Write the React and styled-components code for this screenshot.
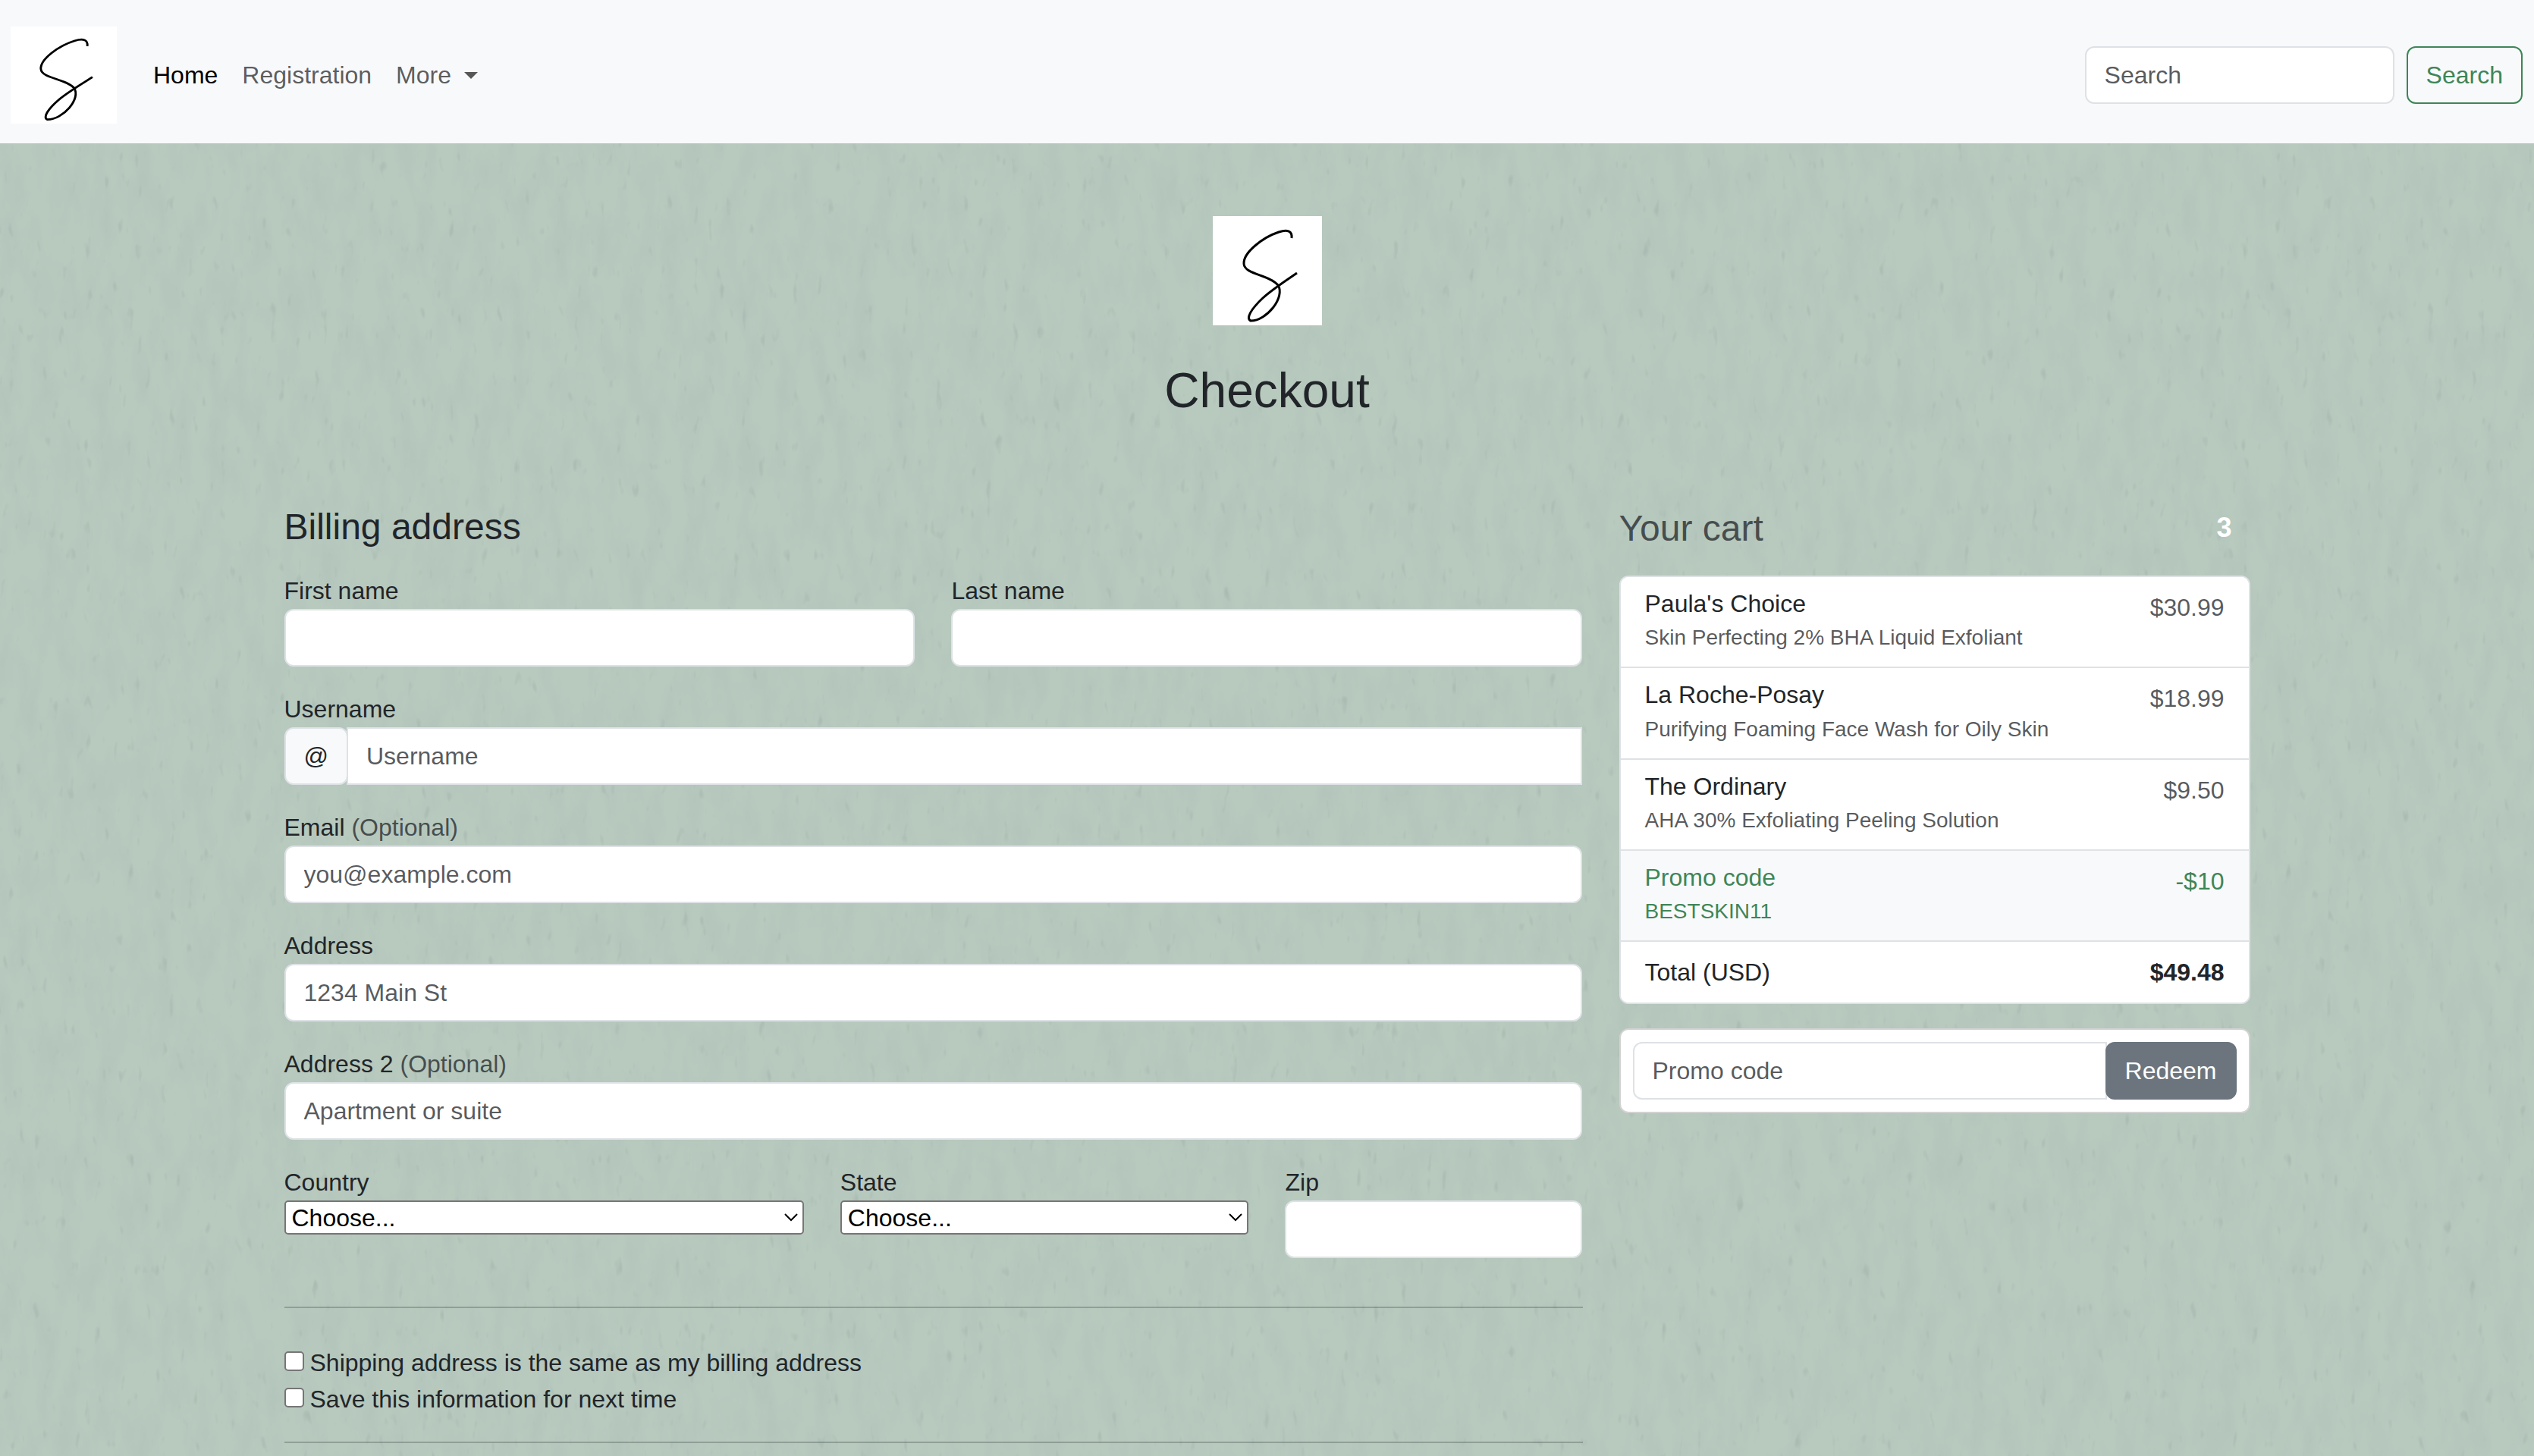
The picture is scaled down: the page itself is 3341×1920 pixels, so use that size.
import React from "react";
import styled, { createGlobalStyle } from "styled-components";

const GlobalStyle = createGlobalStyle`
  *, *::before, *::after { box-sizing: border-box; }
  body {
    margin: 0;
    background: #b7c8bd;
    color: #212529;
    font: 400 32px/1.5 "Liberation Sans", Arial, sans-serif;
  }
  input, select, button { font: inherit; margin: 0; }
  h2, h4, h6, ul { margin: 0; padding: 0; font-weight: 400; }
`;

const Page = styled.div`
  position: relative;
  isolation: isolate;
  min-height: 100vh;
  overflow: hidden;
`;

const Texture = styled.svg`
  position: absolute;
  inset: 0;
  z-index: -1;
  width: 100%;
  height: 100%;
`;

const Navbar = styled.nav`
  display: flex;
  align-items: center;
  padding: 35px 15px 26px 14px;
  background: #f8f9fb;
`;

const BrandLink = styled.a`
  display: block;
  margin-right: 32px;
  line-height: 0;
`;

const NavList = styled.ul`
  display: flex;
  flex: 1;
  list-style: none;
`;

const NavLink = styled.a`
  display: flex;
  align-items: center;
  padding: 16px;
  color: ${(p) => (p.$active ? "#000" : "rgba(0, 0, 0, 0.65)")};
  text-decoration: none;
`;

const Caret = styled.span`
  margin-left: 17px;
  border: 9px solid transparent;
  border-top-color: currentColor;
  border-bottom: 0;
`;

const SearchForm = styled.form`
  display: flex;
  gap: 16px;
`;

const TextInput = styled.input`
  display: block;
  width: 100%;
  min-width: 0;
  height: 76px;
  padding: 12px 24px;
  border: 2px solid #dee2e6;
  border-radius: ${(p) => p.$radius || "12px"};
  background: #fff;
  color: #212529;
  outline: 0;
  &::placeholder { color: rgba(33, 37, 41, 0.75); opacity: 1; }
`;

const SearchInput = styled(TextInput)`
  width: 408px;
`;

const Button = styled.button`
  flex: none;
  height: 76px;
  padding: 0 24px;
  border: 2px solid ${(p) => (p.$solid ? "#6c757d" : "#3e8657")};
  border-radius: 12px;
  background: ${(p) => (p.$solid ? "#6c757d" : "transparent")};
  color: ${(p) => (p.$solid ? "#fff" : "#3e8657")};
`;

const Container = styled.main`
  max-width: 2592px;
  margin: 0 auto;
`;

const Hero = styled.header`
  display: flex;
  flex-direction: column;
  align-items: center;
  gap: 48px;
  padding: 96px 0 112px;
`;

const PageTitle = styled.h2`
  font-size: 64px;
  line-height: 1.2;
`;

const Columns = styled.div`
  display: grid;
  grid-template-columns: repeat(12, minmax(0, 1fr));
  gap: 32px 48px;
  align-items: start;
`;

const Billing = styled.section`
  grid-column: span 8;
`;

const Cart = styled.aside`
  grid-column: span 4;
`;

const SectionTitle = styled.h4`
  font-size: 48px;
  line-height: 1.2;
  color: ${(p) => (p.$muted ? "rgba(33, 37, 41, 0.75)" : "inherit")};
`;

const Fields = styled(Columns)`
  margin-top: 32px;
`;

const Field = styled.div`
  grid-column: span ${(p) => p.$span || 12};
`;

const Label = styled.label`
  display: block;
`;

const Muted = styled.span`
  color: rgba(33, 37, 41, 0.75);
`;

const InputGroup = styled.div`
  display: flex;
`;

const Addon = styled.span`
  flex: none;
  margin-right: -2px;
  padding: 12px 24px;
  border: 2px solid #dee2e6;
  border-radius: 12px;
  background: #f8f9fb;
`;

const SelectBox = styled.div`
  position: relative;
`;

const Select = styled.select`
  display: block;
  width: 100%;
  height: 45px;
  padding: 0 44px 0 8px;
  border: 2px solid #767676;
  border-radius: 5px;
  background: #fff;
  color: #000;
  line-height: 40px;
  appearance: none;
`;

const Chevron = styled.svg`
  position: absolute;
  right: 7px;
  top: 16px;
  width: 20px;
  height: 12px;
  pointer-events: none;
`;

const Rule = styled.hr`
  height: 2px;
  margin: ${(p) => p.$margin};
  border: 0;
  background: #212529;
  opacity: 0.25;
`;

const CheckRow = styled.label`
  display: flex;
  align-items: center;
  gap: 8px;
`;

const Checkbox = styled.input`
  appearance: none;
  width: 26px;
  height: 26px;
  margin-bottom: 4px;
  border: 2px solid #767676;
  border-radius: 5px;
  background: #fff;
  &:checked { background: #0075ff; }
`;

const CartHeader = styled.div`
  display: flex;
  align-items: center;
  justify-content: space-between;
  height: 61px;
  margin-bottom: 32px;
`;

const Badge = styled.span`
  padding: 0 24px;
  color: #fff;
  font-size: 36px;
  font-weight: 700;
  line-height: 1;
`;

const CartList = styled.ul`
  overflow: hidden;
  border: 2px solid #dee2e6;
  border-radius: 12px;
  background: #fff;
  list-style: none;
`;

const CartItem = styled.li`
  display: flex;
  justify-content: space-between;
  padding: 16px 32px;
  background: ${(p) => (p.$promo ? "#f8f9fb" : "#fff")};
  color: ${(p) => (p.$promo ? "#3e8657" : "#212529")};
  & + & { border-top: 2px solid #dee2e6; }
`;

const ItemName = styled.h6`
  font-size: 32px;
  line-height: 1.2;
`;

const ItemNote = styled.small`
  color: ${(p) => (p.$promo ? "inherit" : "rgba(33, 37, 41, 0.75)")};
  font-size: 28px;
`;

const Price = styled.span`
  color: ${(p) => (p.$promo ? "inherit" : "rgba(33, 37, 41, 0.75)")};
`;

const PromoCard = styled.form`
  display: flex;
  margin-top: 32px;
  padding: 16px;
  border: 2px solid rgba(0, 0, 0, 0.175);
  border-radius: 12px;
  background: #fff;
`;

const RedeemButton = styled(Button)`
  margin-left: -2px;
`;

function Logo({ width, height }) {
  return (
    <svg
      width={width}
      height={height}
      viewBox="0 0 144 144"
      preserveAspectRatio="none"
      role="img"
      aria-label="S"
    >
      <rect width="144" height="144" fill="#fff" />
      <path
        d="M104 29C105 20 99 17 87 21C66 28 40 48 41 63C42 77 74 77 86 91C96 107 71 138 50 138C43 135 51 122 66 108C78 97 95 86 111 75"
        fill="none"
        stroke="#000"
        strokeWidth="3"
      />
    </svg>
  );
}

const items = [
  { name: "Paula's Choice", note: "Skin Perfecting 2% BHA Liquid Exfoliant", price: "$30.99" },
  { name: "La Roche-Posay", note: "Purifying Foaming Face Wash for Oily Skin", price: "$18.99" },
  { name: "The Ordinary", note: "AHA 30% Exfoliating Peeling Solution", price: "$9.50" },
  { name: "Promo code", note: "BESTSKIN11", price: "-$10", promo: true },
];

function SelectField({ id, label, span }) {
  return (
    <Field $span={span}>
      <Label htmlFor={id}>{label}</Label>
      <SelectBox>
        <Select id={id}>
          <option>Choose...</option>
        </Select>
        <Chevron viewBox="0 0 20 12" aria-hidden="true">
          <path d="M2 2L10 10L18 2" fill="none" stroke="#000" strokeWidth="2" />
        </Chevron>
      </SelectBox>
    </Field>
  );
}

function TextField({ id, label, optional, span, ...rest }) {
  return (
    <Field $span={span}>
      <Label htmlFor={id}>
        {label}
        {optional && <Muted> (Optional)</Muted>}
      </Label>
      <TextInput id={id} {...rest} />
    </Field>
  );
}

export default function App() {
  return (
    <Page>
      <GlobalStyle />
      <Texture aria-hidden="true">
        <filter id="mottle" x="0" y="0" width="100%" height="100%" colorInterpolationFilters="sRGB">
          <feTurbulence type="fractalNoise" baseFrequency="0.04 0.014" numOctaves="4" seed="7" />
          <feColorMatrix values="0 0 0 0 0.67  0 0 0 0 0.74  0 0 0 0 0.72  0.7 0 0 0 -0.26" />
        </filter>
        <filter id="flecks" x="0" y="0" width="100%" height="100%" colorInterpolationFilters="sRGB">
          <feTurbulence type="fractalNoise" baseFrequency="0.09 0.035" numOctaves="2" seed="21" />
          <feColorMatrix values="0 0 0 0 0.56  0 0 0 0 0.64  0 0 0 0 0.61  0 1.5 0 0 -1.03" />
        </filter>
        <rect width="100%" height="100%" fill="#b8c9be" />
        <rect width="100%" height="100%" filter="url(#mottle)" />
        <rect width="100%" height="100%" filter="url(#flecks)" />
      </Texture>

      <Navbar>
        <BrandLink href="#" aria-label="Home page">
          <Logo width="140" height="128" />
        </BrandLink>
        <NavList>
          <li><NavLink href="#" $active>Home</NavLink></li>
          <li><NavLink href="#">Registration</NavLink></li>
          <li><NavLink href="#">More<Caret /></NavLink></li>
        </NavList>
        <SearchForm role="search">
          <SearchInput type="search" placeholder="Search" aria-label="Search" />
          <Button type="button">Search</Button>
        </SearchForm>
      </Navbar>

      <Container>
        <Hero>
          <Logo width="144" height="144" />
          <PageTitle>Checkout</PageTitle>
        </Hero>

        <Columns>
          <Billing>
            <SectionTitle>Billing address</SectionTitle>
            <form>
              <Fields>
                <TextField id="first" label="First name" span={6} />
                <TextField id="last" label="Last name" span={6} />
                <Field>
                  <Label htmlFor="username">Username</Label>
                  <InputGroup>
                    <Addon>@</Addon>
                    <TextInput id="username" placeholder="Username" $radius="0" />
                  </InputGroup>
                </Field>
                <TextField id="email" type="email" label="Email" optional placeholder="you@example.com" />
                <TextField id="address" label="Address" placeholder="1234 Main St" />
                <TextField id="address2" label="Address 2" optional placeholder="Apartment or suite" />
                <SelectField id="country" label="Country" span={5} />
                <SelectField id="state" label="State" span={4} />
                <TextField id="zip" label="Zip" span={3} />
              </Fields>
              <Rule $margin="64px 0 48px" />
              <CheckRow>
                <Checkbox type="checkbox" />
                Shipping address is the same as my billing address
              </CheckRow>
              <CheckRow>
                <Checkbox type="checkbox" />
                Save this information for next time
              </CheckRow>
              <Rule $margin="32px 0 0" />
            </form>
          </Billing>

          <Cart>
            <CartHeader>
              <SectionTitle $muted>Your cart</SectionTitle>
              <Badge>3</Badge>
            </CartHeader>
            <CartList>
              {items.map((item) => (
                <CartItem key={item.name} $promo={item.promo}>
                  <div>
                    <ItemName>{item.name}</ItemName>
                    <ItemNote $promo={item.promo}>{item.note}</ItemNote>
                  </div>
                  <Price $promo={item.promo}>{item.price}</Price>
                </CartItem>
              ))}
              <CartItem>
                <span>Total (USD)</span>
                <strong>$49.48</strong>
              </CartItem>
            </CartList>
            <PromoCard>
              <TextInput placeholder="Promo code" aria-label="Promo code" $radius="12px 0 0 12px" />
              <RedeemButton type="button" $solid>Redeem</RedeemButton>
            </PromoCard>
          </Cart>
        </Columns>
      </Container>
    </Page>
  );
}
